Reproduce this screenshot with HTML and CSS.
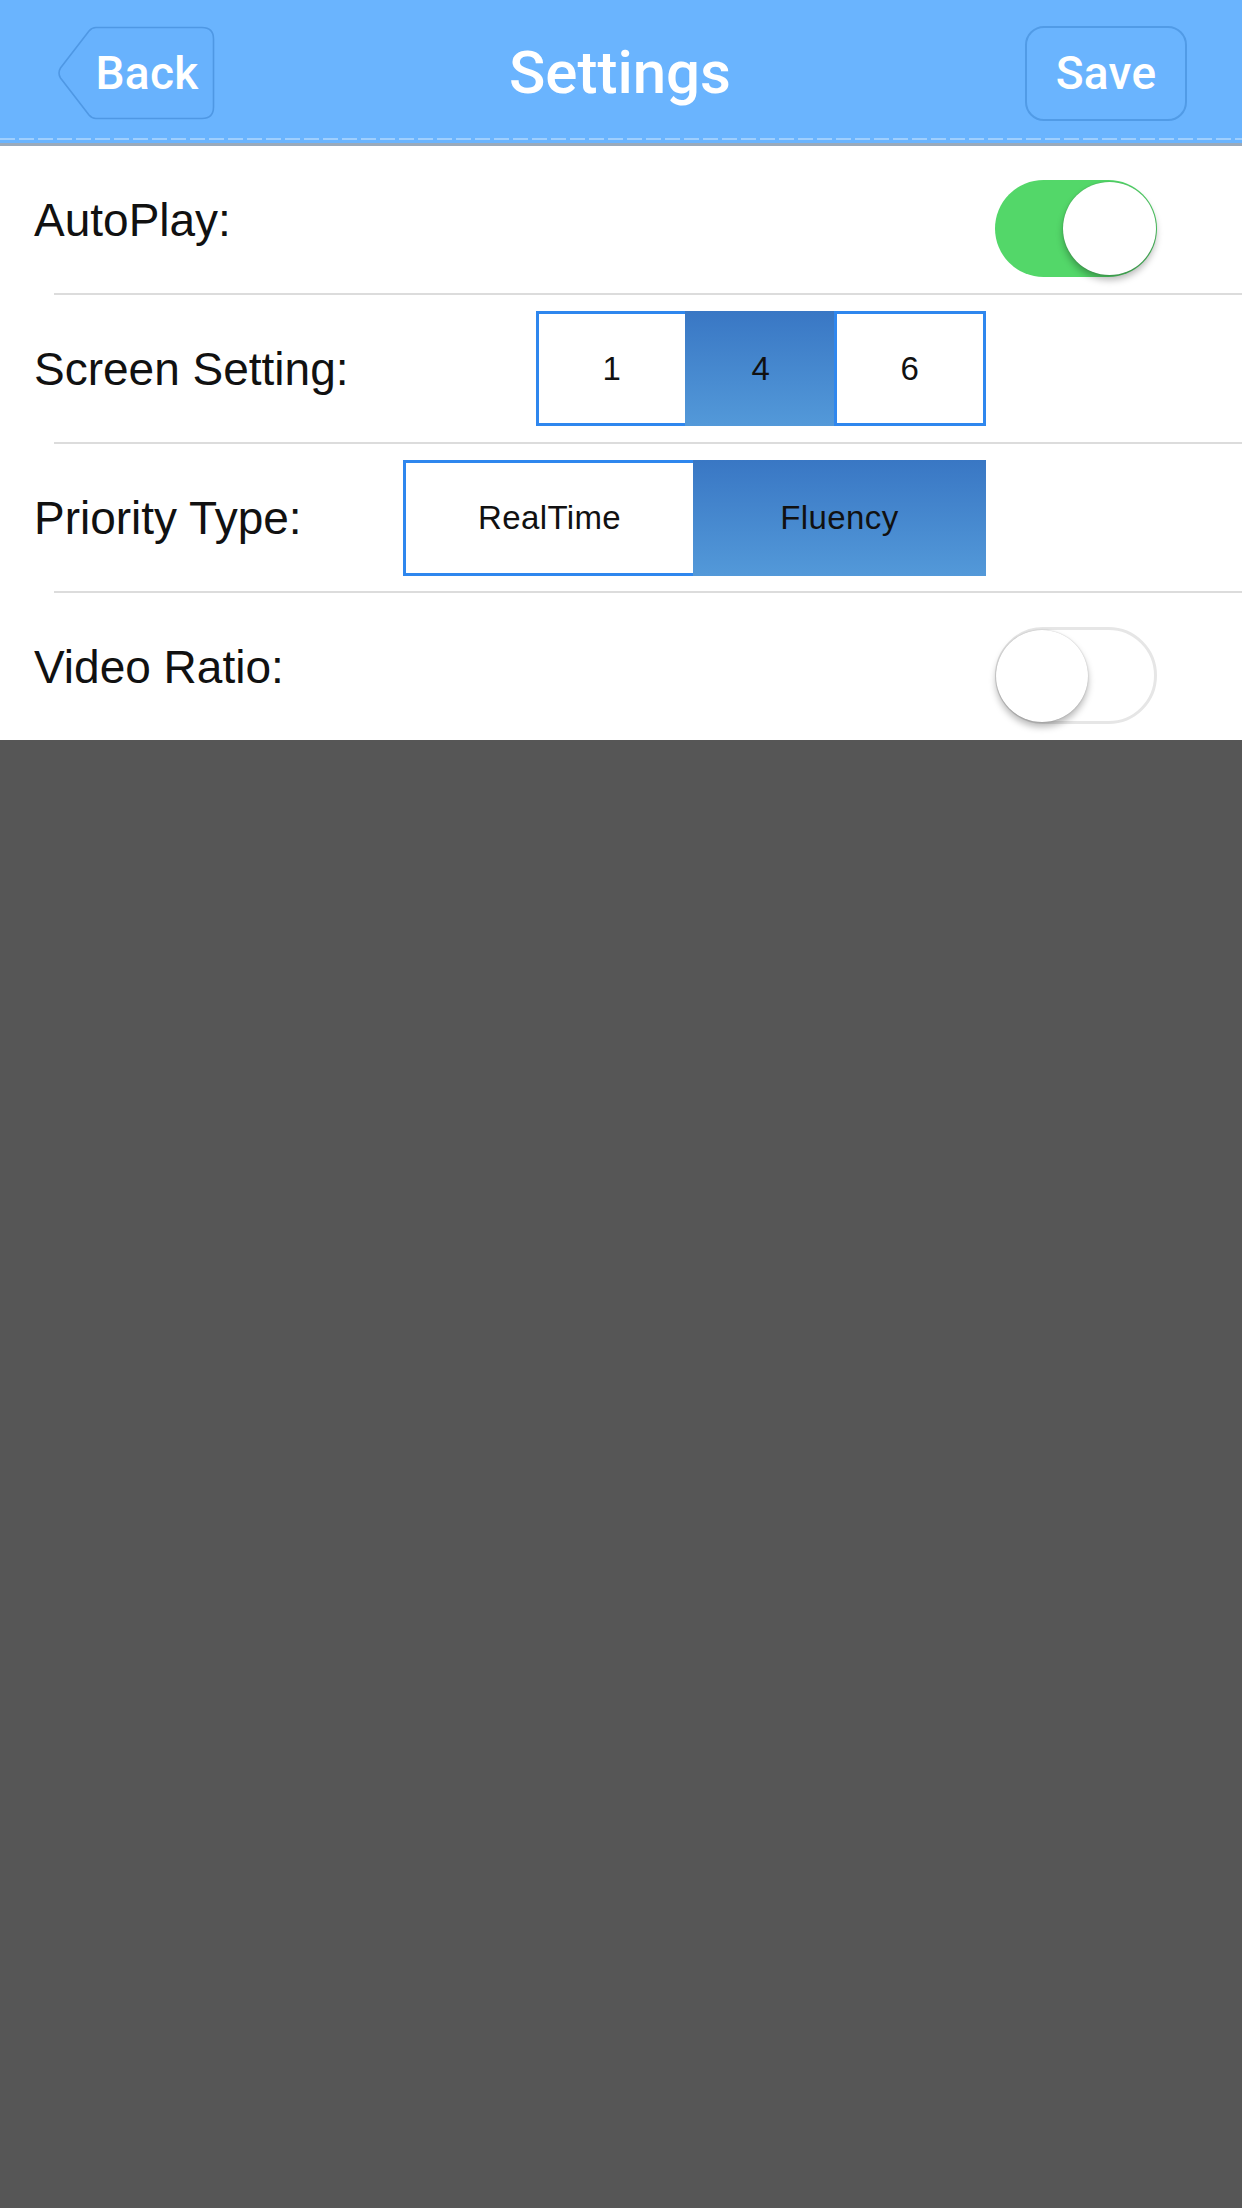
FILE: index.html
```html
<!DOCTYPE html>
<html lang="en">
<head>
<meta charset="utf-8">
<title>Settings</title>
<link rel="stylesheet" href="styles.css">
</head>
<body>
<div class="screen">
  <header class="topbar">
    <button class="nav back" type="button">
      <svg class="back-shape" viewBox="0 0 158 94" width="158" height="94" aria-hidden="true">
        <path d="M39 1.5 H145 Q156.5 1.5 156.5 13 V81 Q156.5 92.5 145 92.5 H39 Q35 92.5 32 89 L3.5 52 Q0.5 47 3.5 42 L32 5 Q35 1.5 39 1.5 Z" fill="#68b2fd" stroke="#4f98e4" stroke-width="1.6"/>
      </svg>
      <span class="nav-label">Back</span>
    </button>
    <h1 class="title">Settings</h1>
    <button class="nav save" type="button"><span class="nav-label">Save</span></button>
  </header>

  <main class="list">
    <div class="row">
      <span class="label">AutoPlay:</span>
      <div class="switch on"><span class="knob"></span></div>
    </div>
    <div class="sep"></div>
    <div class="row">
      <span class="label">Screen Setting:</span>
      <div class="segmented screens">
        <span class="seg">1</span>
        <span class="seg active">4</span>
        <span class="seg">6</span>
      </div>
    </div>
    <div class="sep"></div>
    <div class="row">
      <span class="label">Priority Type:</span>
      <div class="segmented priority">
        <span class="seg">RealTime</span>
        <span class="seg active">Fluency</span>
      </div>
    </div>
    <div class="sep"></div>
    <div class="row">
      <span class="label">Video Ratio:</span>
      <div class="switch off"><span class="knob"></span></div>
    </div>
  </main>
</div>
</body>
</html>
```

FILE: styles.css
```css
html, body {
  margin: 0;
  padding: 0;
}

body {
  background: #565656;
  width: 1242px;
  min-height: 2208px;
  font-family: "Liberation Sans", Arial, sans-serif;
}

.screen {
  display: flex;
  flex-direction: column;
}

/* ---------- top bar ---------- */
.topbar {
  height: 146px;
  box-sizing: border-box;
  display: flex;
  align-items: center;
  justify-content: space-between;
  padding: 0 55px 0 57px;
  background:
    repeating-linear-gradient(90deg, #9fcffe 0 15px, #6ab4fe 15px 19px) 0 138px / 100% 2px no-repeat,
    linear-gradient(#9aaabb, #9aaabb) 0 143px / 100% 3px no-repeat,
    #6ab4fe;
}

.nav {
  margin: 0;
  padding: 0;
  border: 0;
  background: none;
  color: #ffffff;
  font-family: Roboto, "Liberation Sans", sans-serif;
  font-weight: 500;
  font-size: 46px;
  cursor: pointer;
}

.back {
  display: grid;
  width: 158px;
  height: 94px;
  margin-top: -1px;
}

.back > .back-shape,
.back > .nav-label {
  grid-area: 1 / 1;
}

.back > .nav-label {
  align-self: center;
  justify-self: center;
  padding-left: 22px;
}

.save {
  width: 162px;
  height: 95px;
  box-sizing: border-box;
  border: 2px solid #519be6;
  border-radius: 19px;
  display: flex;
  align-items: center;
  justify-content: center;
}

.nav-label {
  line-height: 1;
  letter-spacing: 0.3px;
}

.title {
  margin: 0;
  color: #ffffff;
  font-family: Roboto, "Liberation Sans", sans-serif;
  font-weight: 500;
  font-size: 60px;
  line-height: 1;
}

/* ---------- list ---------- */
.list {
  background: #ffffff;
  display: flex;
  flex-direction: column;
}

.row {
  height: 147px;
  display: flex;
  align-items: center;
  padding-left: 34px;
}

.sep {
  height: 2px;
  margin-left: 54px;
  background: #dcdcdc;
}

.label {
  font-size: 46px;
  color: #111111;
  line-height: 1;
}

/* ---------- switches ---------- */
.switch {
  margin-left: auto;
  margin-right: 85px;
  margin-top: 18px;
  width: 162px;
  height: 97px;
  border-radius: 49px;
  box-sizing: border-box;
  display: flex;
  align-items: center;
}

.switch.on {
  background: #53d769;
  justify-content: flex-end;
  padding: 0 1px;
}

.switch.off {
  background: #ffffff;
  border: 3px solid #e6e6e6;
  justify-content: flex-start;
  padding: 0;
}

.knob {
  width: 93px;
  height: 93px;
  border-radius: 50%;
  background: #ffffff;
  box-shadow: 0 5px 7px rgba(0, 0, 0, 0.28), 0 0 1.5px rgba(0, 0, 0, 0.25);
}

.switch.off .knob {
  width: 92px;
  height: 92px;
  margin-left: -2px;
}

/* ---------- segmented controls ---------- */
.segmented {
  margin-left: auto;
  margin-right: 256px;
  display: flex;
}

.seg {
  box-sizing: border-box;
  display: flex;
  align-items: center;
  justify-content: center;
  border: 3px solid #2f87ee;
  background: #ffffff;
  color: #111111;
  font-size: 33px;
  letter-spacing: 0.4px;
}

.seg + .seg {
  margin-left: -3px;
}

.seg.active {
  border-color: transparent;
  background: linear-gradient(#3977c4, #5399d9) border-box;
}

.screens .seg {
  width: 152px;
  height: 115px;
}

.priority .seg {
  width: 293px;
  height: 116px;
}
```
